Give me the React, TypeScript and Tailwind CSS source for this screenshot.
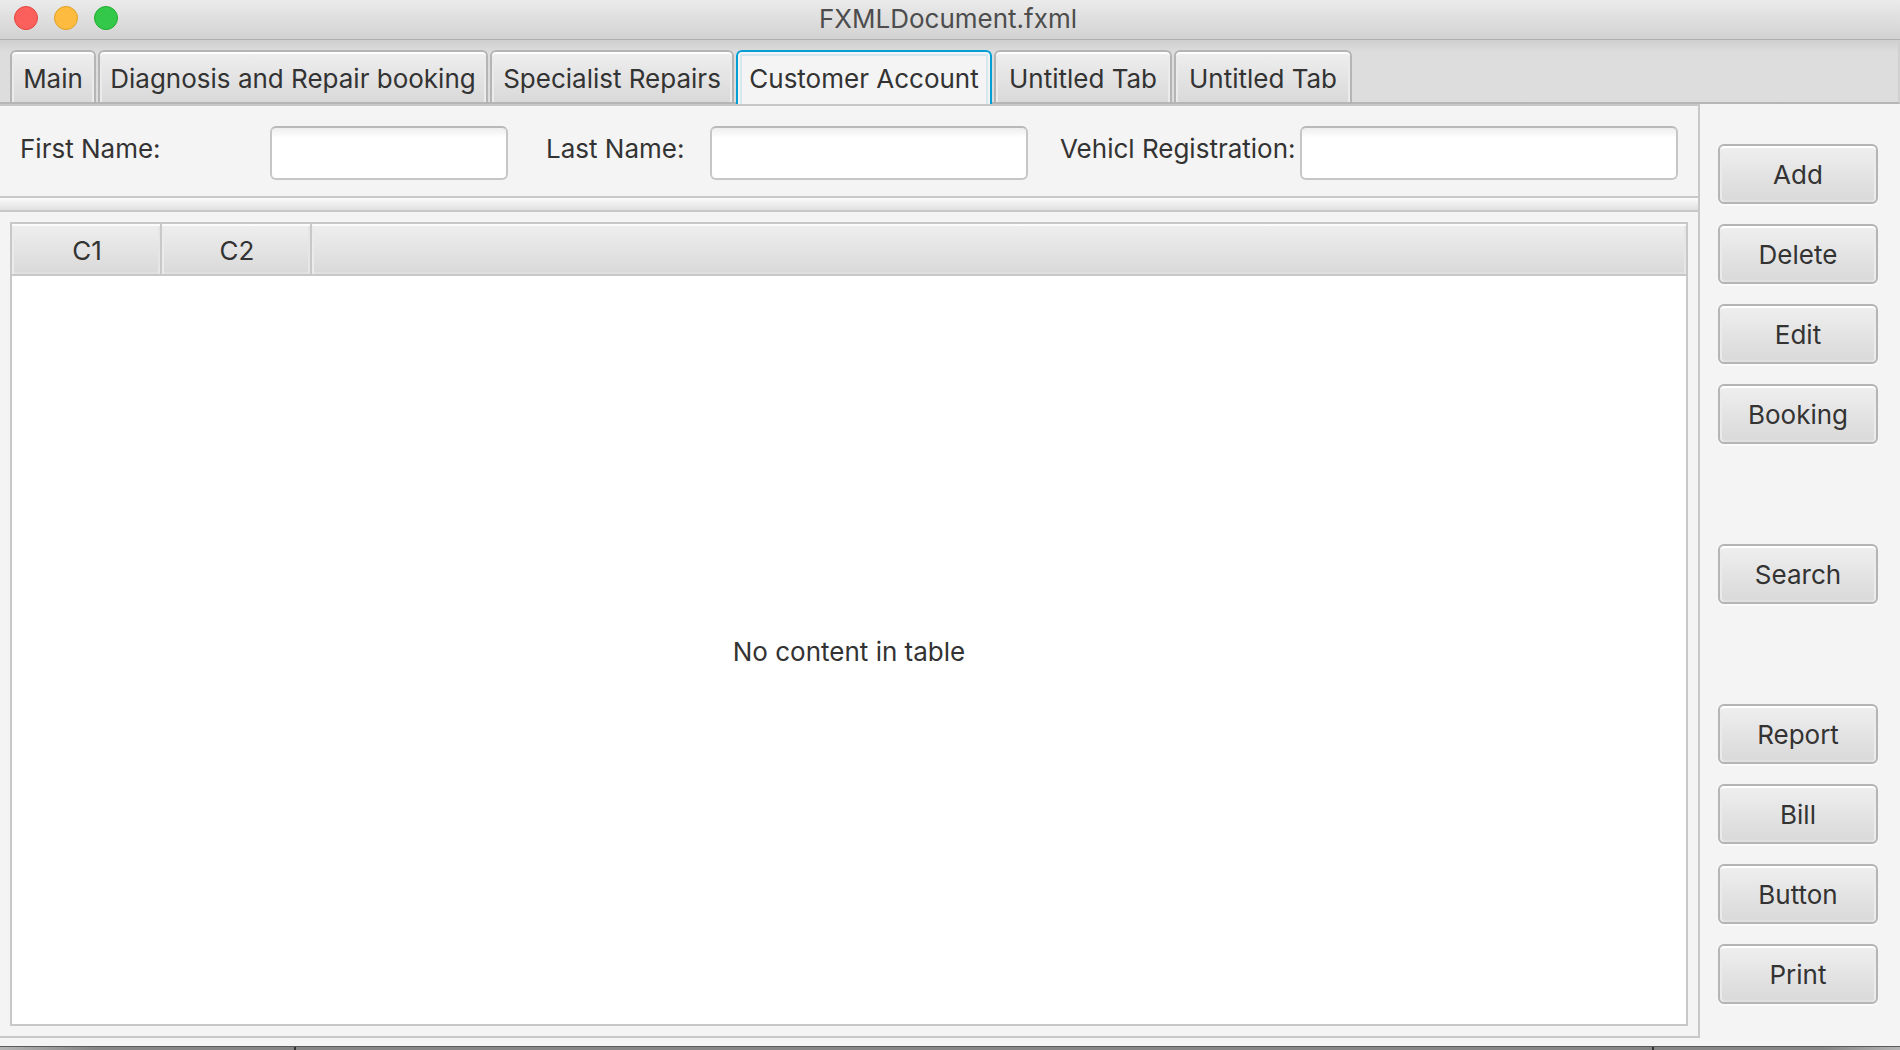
const tabs = [
  { id: "main", label: "Main", width: "w-[86px]" },
  { id: "diagnosis", label: "Diagnosis and Repair booking", width: "w-[390px]" },
  { id: "specialist", label: "Specialist Repairs", width: "w-[244px]" },
  { id: "customer", label: "Customer Account", width: "w-[256px]", active: true },
  { id: "untitled-1", label: "Untitled Tab", width: "w-[178px]" },
  { id: "untitled-2", label: "Untitled Tab", width: "w-[178px]" },
];

const actionGroups = [
  ["Add", "Delete", "Edit", "Booking"],
  ["Search"],
  ["Report", "Bill", "Button", "Print"],
];

function TitleBar() {
  return (
    <header className="relative flex h-10 items-center justify-center border-b border-[#b0b0b0] bg-linear-to-b from-[#ebebeb] to-[#d2d2d2]">
      <div className="absolute top-[6px] left-[14px] flex gap-4">
        <button aria-label="Close" className="size-6 rounded-full border border-[#e2463f] bg-[#fc605c]" />
        <button aria-label="Minimize" className="size-6 rounded-full border border-[#dfa023] bg-[#fdbc40]" />
        <button aria-label="Zoom" className="size-6 rounded-full border border-[#1dad2b] bg-[#34c84a]" />
      </div>
      <h1 className="pr-1 pb-[2px] text-[26px] leading-8 text-[#4d4d4d]">FXMLDocument.fxml</h1>
    </header>
  );
}

function TabBar() {
  return (
    <nav
      role="tablist"
      className="flex h-16 items-end gap-[2px] border-r-2 border-b-2 border-r-[#d0d0d0] border-b-[#b5b5b5] bg-linear-to-b from-[#cfcfcf] to-[#dddddd] to-20% pl-[10px]"
    >
      {tabs.map((tab) =>
        tab.active ? (
          <button
            key={tab.id}
            role="tab"
            aria-selected="true"
            className={`${tab.width} -mb-[2px] flex h-[54px] items-center justify-center rounded-t-md border-2 border-b-0 border-[#039ed3] bg-[#f4f4f4] pt-[2px] whitespace-nowrap shadow-[inset_0_2px_0_#f4f4f4,inset_2px_0_0_#f4f4f4,inset_-2px_0_0_#f4f4f4,inset_0_4px_0_#d4e7ef,inset_4px_0_0_#d4e7ef,inset_-4px_0_0_#d4e7ef]`}
          >
            {tab.label}
          </button>
        ) : (
          <button
            key={tab.id}
            role="tab"
            aria-selected="false"
            className={`${tab.width} flex h-[52px] items-center justify-center rounded-t-md border-2 border-b-0 border-[#b5b5b5] bg-linear-to-b from-[#efefef] to-[#d9d9d9] pt-1 whitespace-nowrap shadow-[inset_0_2px_0_#ffffff,inset_2px_0_0_#ebebeb,inset_-2px_0_0_#ebebeb]`}
          >
            {tab.label}
          </button>
        ),
      )}
    </nav>
  );
}

const inputClass =
  "h-[54px] min-w-0 basis-0 rounded-md border-2 border-[#c6c6c6] border-t-[#b9b9b9] bg-linear-to-b from-[#eeeeee] to-white to-20% indent-3 outline-none";

function SearchForm() {
  return (
    <form className="flex h-[90px] items-start px-5 pt-5">
      <label htmlFor="first" className="w-[250px] shrink-0 pt-[7px]">
        First Name:
      </label>
      <input id="first" type="text" className={`${inputClass} grow-[234]`} />
      <label htmlFor="last" className="w-[202px] shrink-0 pt-[7px] pl-[38px]">
        Last Name:
      </label>
      <input id="last" type="text" className={`${inputClass} grow-[314]`} />
      <label htmlFor="reg" className="w-[272px] shrink-0 pt-[7px] pl-8 whitespace-nowrap">
        Vehicl Registration:
      </label>
      <input id="reg" type="text" className={`${inputClass} grow-[374]`} />
    </form>
  );
}

const headClass =
  "border-b-2 border-[#c8c8c8] bg-linear-to-b from-[#efefef] to-[#d9d9d9] pt-1 pr-0 pb-0 pl-[2px] font-normal shadow-[inset_0_2px_0_#fbfbfb,inset_2px_0_0_#ebebeb,inset_-2px_0_0_#e6e6e6,inset_0_-2px_0_#e0e0e0]";

function CustomerTable() {
  return (
    <div className="m-[10px] flex grow flex-col border-2 border-[#c8c8c8] bg-white">
      <table className="w-full grow border-separate border-spacing-0">
        <thead>
          <tr className="h-[52px]">
            <th className={`${headClass} w-[150px] border-r-2`}>C1</th>
            <th className={`${headClass} w-[150px] border-r-2`}>C2</th>
            <th className={headClass} aria-label="Empty column" />
          </tr>
        </thead>
        <tbody>
          <tr>
            <td colSpan={3} className="px-0 pt-1 pb-0 text-center align-middle">
              No content in table
            </td>
          </tr>
        </tbody>
      </table>
    </div>
  );
}

function ActionPanel() {
  return (
    <aside className="flex w-[200px] shrink-0 flex-col gap-[100px] pt-10 pr-[22px] pl-[18px]">
      {actionGroups.map((group) => (
        <div key={group[0]} className="flex flex-col gap-5">
          {group.map((label) => (
            <button
              key={label}
              className="h-[60px] rounded-md border-2 border-[#b5b5b5] bg-linear-to-b from-[#efefef] to-[#d9d9d9] pt-[2px] shadow-[inset_0_2px_0_#ffffff,inset_2px_0_0_#ebebeb,inset_-2px_0_0_#ebebeb,inset_0_-2px_0_#e0e0e0,0_2px_0_#fafafa]"
            >
              {label}
            </button>
          ))}
        </div>
      ))}
    </aside>
  );
}

export default function App() {
  return (
    <div className="flex min-h-screen flex-col bg-[#f4f4f4] font-['Inter',sans-serif] text-[26px] leading-8 text-[#333333]">
      <TitleBar />
      <TabBar />
      <div className="flex grow">
        <main className="mb-2 flex min-w-0 grow basis-0 flex-col border-t-2 border-r-2 border-b-2 border-[#c8c8c8]">
          <SearchForm />
          <div className="h-4 border-y-2 border-[#c8c8c8] bg-linear-to-b from-[#fbfbfb] to-[#e0e0e0]" />
          <CustomerTable />
        </main>
        <ActionPanel />
      </div>
      <footer className="flex h-1 justify-between border-t border-[#5a5a5a] bg-linear-[90deg,#b5b5b5,#868686_5%,#868686_96%,#b5b5b5] pr-[246px] pl-[294px]">
        <span className="w-[2px] bg-[#333333]" />
        <span className="w-[2px] bg-[#333333]" />
      </footer>
    </div>
  );
}
